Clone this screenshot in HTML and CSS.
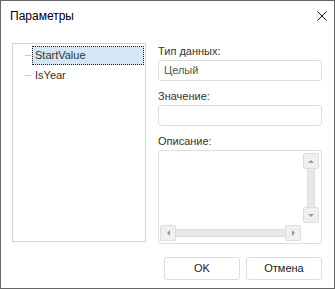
FILE: index.html
```html
<!DOCTYPE html>
<html lang="ru">
    <head>
        <meta charset="utf-8" />
        <title>Параметры</title>
        <link rel="stylesheet" href="styles.css">
    </head>
    <body>
        <div class="dialog">
            <div class="titlebar">
                <span class="title">Параметры</span>
                <svg class="close" width="10" height="10" viewBox="0 0 10 10">
                    <path d="M0.5 0.5 L9.5 9.5 M9.5 0.5 L0.5 9.5" stroke="#111" stroke-width="1" fill="none" />
                </svg>
            </div>

            <div class="content">
                <div class="tree">
                    <div class="node">
                        <span class="branch"></span>
                        <span class="label selected">StartValue</span>
                    </div>
                    <div class="node">
                        <span class="branch"></span>
                        <span class="label">IsYear</span>
                    </div>
                </div>

                <div class="fields">
                    <div class="field-label">Тип данных:</div>
                    <div class="input">Целый</div>

                    <div class="field-label">Значение:</div>
                    <div class="input"></div>

                    <div class="field-label">Описание:</div>
                    <div class="memo">
                        <div class="memo-text"></div>
                        <div class="vscroll">
                            <div class="sbtn"><span class="arrow up"></span></div>
                            <div class="vtrack"></div>
                            <div class="sbtn"><span class="arrow down"></span></div>
                        </div>
                        <div class="hscroll">
                            <div class="sbtn"><span class="arrow left"></span></div>
                            <div class="htrack"></div>
                            <div class="sbtn"><span class="arrow right"></span></div>
                        </div>
                    </div>
                </div>
            </div>

            <div class="buttons">
                <div class="button">OK</div>
                <div class="button">Отмена</div>
            </div>
        </div>
    </body>
</html>
```

FILE: styles.css
```css
body {
    margin: 0;
    font-family: "Liberation Sans", Arial, sans-serif;
    font-size: 11px;
    color: #333;
}

.dialog {
    width: 335px;
    height: 289px;
    box-sizing: border-box;
    border: 1px solid #666;
    background: #fff;
    display: flex;
    flex-direction: column;
}

.titlebar {
    height: 30px;
    display: flex;
    align-items: center;
    justify-content: space-between;
    padding: 0 7px 0 9px;
}

.titlebar .title {
    font-family: "Liberation Sans", Arial, sans-serif;
    font-size: 12px;
    color: #000;
}

.content {
    display: grid;
    grid-template-columns: 134px 164px;
    column-gap: 12px;
    padding: 12px 12px 0 11px;
}

.tree {
    height: 199px;
    box-sizing: border-box;
    border: 1px solid #d4d4d4;
    padding: 1px 1px 0 12px;
}

.node {
    display: flex;
    align-items: center;
    height: 20px;
}

.branch {
    width: 6px;
    height: 1px;
    background: #ccc;
    margin-right: 1px;
}

.label {
    flex: 1;
    height: 19px;
    line-height: 17px;
    padding-left: 2px;
    box-sizing: border-box;
    border: 1px solid transparent;
}

.label.selected {
    background: #d5e6f5;
    border: 1px dotted #222;
}

.fields {
    display: flex;
    flex-direction: column;
}

.field-label {
    line-height: 16px;
    margin-bottom: 1px;
}

.input {
    height: 21px;
    box-sizing: border-box;
    border: 1px solid #ddd;
    border-radius: 3px;
    padding: 0 5px;
    line-height: 19px;
    color: #555;
    margin-bottom: 7px;
}

.memo {
    height: 94px;
    box-sizing: border-box;
    border: 1px solid #ddd;
    border-radius: 3px;
    display: grid;
    grid-template-columns: 141px 16px;
    grid-template-rows: 70px 16px;
    gap: 2px;
    padding: 2px 2px 2px 1px;
}

.vscroll {
    display: flex;
    flex-direction: column;
    align-items: center;
}

.hscroll {
    display: flex;
    align-items: center;
}

.sbtn {
    width: 16px;
    height: 16px;
    box-sizing: border-box;
    border: 1px solid #ddd;
    border-radius: 2px;
    background: #f0f0f0;
    display: flex;
    align-items: center;
    justify-content: center;
    flex: none;
}

.vtrack {
    flex: 1;
    width: 6px;
    background: #e8e8e8;
    border-left: 1px solid #ddd;
    border-right: 1px solid #ddd;
}

.htrack {
    flex: 1;
    height: 6px;
    background: #e8e8e8;
    border-top: 1px solid #ddd;
    border-bottom: 1px solid #ddd;
}

.arrow {
    width: 0;
    height: 0;
    border: 3px solid transparent;
}

.arrow.up {
    border-bottom-color: #999;
    border-top-width: 0;
}

.arrow.down {
    border-top-color: #999;
    border-bottom-width: 0;
}

.arrow.left {
    border-right-color: #999;
    border-left-width: 0;
}

.arrow.right {
    border-left-color: #999;
    border-right-width: 0;
}

.buttons {
    display: flex;
    justify-content: flex-end;
    gap: 6px;
    padding: 13px 12px 0 0;
}

.button {
    width: 76px;
    height: 23px;
    box-sizing: border-box;
    border: 1px solid #ddd;
    border-radius: 3px;
    text-align: center;
    line-height: 21px;
    color: #222;
}
```
